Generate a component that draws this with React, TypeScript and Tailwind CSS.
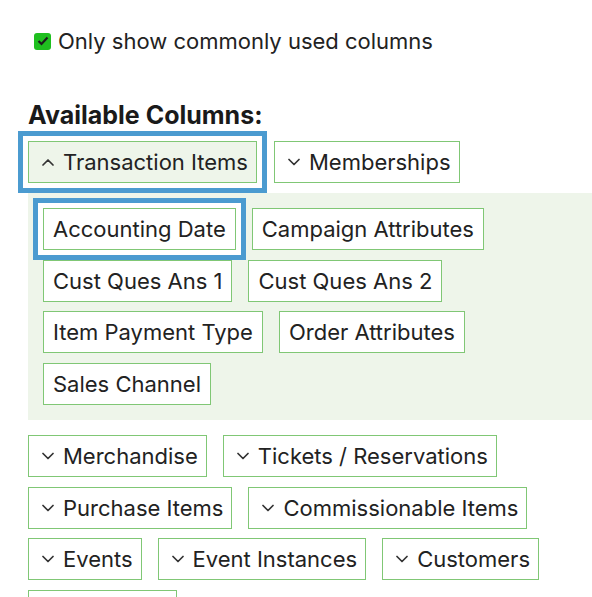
import React from 'react';

const font = { fontFamily: 'Inter, "Noto Sans", sans-serif' };

const panelColumns = [
    'Accounting Date',
    'Campaign Attributes',
    'Cust Ques Ans 1',
    'Cust Ques Ans 2',
    'Item Payment Type',
    'Order Attributes',
    'Sales Channel',
];

const otherGroups = [
    'Merchandise',
    'Tickets / Reservations',
    'Purchase Items',
    'Commissionable Items',
    'Events',
    'Event Instances',
    'Customers',
    'Donations',
];

const focusRing = 'shadow-[0_0_0_5px_#ffffff,0_0_0_10px_#4b9bd0]';

const Chevron = ({ up }: { up?: boolean }) => (
    <svg width="12" height="8" viewBox="0 0 12 8" className="shrink-0">
        <polyline
            points={up ? '1,7 6,2 11,7' : '1,1.5 6,6.5 11,1.5'}
            fill="none"
            stroke="#333333"
            strokeWidth="1.7"
            strokeLinecap="round"
            strokeLinejoin="round"
        />
    </svg>
);

const GroupButton = ({ label, open, focused }: { label: string; open?: boolean; focused?: boolean }) => (
    <button
        className={`h-[42px] flex items-center gap-[9px] pl-[13px] pr-[8px] border border-[#80c775] text-[22px] text-[#222222] leading-none whitespace-nowrap ${open ? 'bg-[#eef5ea]' : 'bg-white'} ${focused ? focusRing : ''}`}
    >
        <Chevron up={open} />
        <span>{label}</span>
    </button>
);

const ColumnButton = ({ label, focused }: { label: string; focused?: boolean }) => (
    <button
        className={`h-[42px] px-[9px] bg-white border border-[#80c775] text-[22px] text-[#222222] leading-none whitespace-nowrap ${focused ? focusRing : ''}`}
    >
        {label}
    </button>
);

export default function App() {
    return (
        <div className="min-h-screen bg-white pl-[28px] pt-[31px]" style={font}>
            {/* commonly used toggle */}
            <label className="ml-[6px] flex items-center gap-[7px] h-[20px] text-[22px] text-[#222222]">
                <span className="w-[17px] h-[17px] rounded-[3px] bg-[#1fbf1f] flex items-center justify-center">
                    <svg width="12" height="10" viewBox="0 0 12 10">
                        <polyline points="1.5,5 4.5,8 10.5,1.5" fill="none" stroke="#1c1c1c" strokeWidth="2.2" />
                    </svg>
                </span>
                Only show commonly used columns
            </label>

            <h2 className="mt-[49px] text-[25px] font-bold text-[#1a1a1a] leading-[30px]">Available Columns:</h2>

            <div className="mt-[11px] flex gap-[17px]">
                <GroupButton label="Transaction Items" open focused />
                <GroupButton label="Memberships" />
            </div>

            {/* expanded group */}
            <div className="mt-[10px] bg-[#eef5ea] p-[15px] flex flex-wrap gap-x-[16px] gap-y-[9.7px]">
                {panelColumns.map((c, i) => (
                    <ColumnButton key={c} label={c} focused={i === 0} />
                ))}
            </div>

            <div className="mt-[15px] flex flex-wrap gap-x-[16px] gap-y-[9.7px] pr-[20px]">
                {otherGroups.map(g => (
                    <GroupButton key={g} label={g} />
                ))}
            </div>
        </div>
    );
}
